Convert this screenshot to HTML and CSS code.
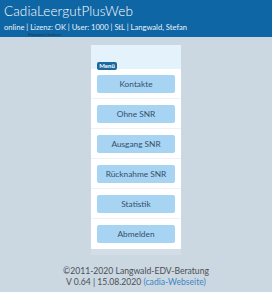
FILE: index.html
```html
<!DOCTYPE html>
<html lang="de">
<head>
<meta charset="utf-8">
<link rel="stylesheet" href="styles.css">
</head>
<body>
<header class="top">
  <div class="title">CadiaLeergutPlusWeb</div>
  <div class="status">online | Lizenz: OK | User: 1000 | StL | Langwald, Stefan</div>
  <div class="hint">Passwort ändern</div>
</header>
<main class="content">
  <section class="panel">
    <div class="panel-head"><span class="badge">Menü</span></div>
    <ul class="menu">
      <li class="row"><a class="btn">Kontakte</a></li>
      <li class="row"><a class="btn">Ohne SNR</a></li>
      <li class="row"><a class="btn">Ausgang SNR</a></li>
      <li class="row"><a class="btn">Rücknahme SNR</a></li>
      <li class="row"><a class="btn">Statistik</a></li>
      <li class="row"><a class="btn">Abmelden</a></li>
    </ul>
  </section>
  <div class="panel-foot"></div>
  <footer class="foot">
    <div>©2011-2020 Langwald-EDV-Beratung</div>
    <div>V 0.64 | 15.08.2020 <a class="link">(cadia-Webseite)</a></div>
  </footer>
</main>
</body>
</html>
```
FILE: styles.css
```css
html, body {
  margin: 0;
  padding: 0;
  background: #ffffff;
  font-family: Lato, "Open Sans", sans-serif;
}
.top {
  position: relative;
  background: #0f66a5;
  color: #ffffff;
  height: 37px;
  padding: 0 4px;
  box-sizing: border-box;
}
.title {
  font-size: 13.5px;
  line-height: 13px;
  padding-top: 5px;
  font-weight: 300;
  letter-spacing: 0.1px;
}
.status {
  font-size: 7.6px;
  line-height: 9px;
  padding-top: 5px;
  color: #eaf3fa;
}
.hint {
  position: absolute;
  left: 28px;
  top: 32px;
  font-size: 4.5px;
  line-height: 5px;
  color: #1b3550;
}
.content {
  background: #cbd7e1;
  height: 255px;
  display: flex;
  flex-direction: column;
  align-items: center;
  padding-top: 8px;
  box-sizing: border-box;
}
.panel {
  width: 90px;
  background: #ffffff;
}
.panel-head {
  background: #e4f2fc;
  height: 24px;
  padding: 7px 0 0 6px;
  box-sizing: border-box;
}
.badge {
  display: inline-block;
  background: #1a68a1;
  color: #ffffff;
  font-size: 6px;
  font-weight: bold;
  line-height: 8px;
  padding: 0 2px;
  border-radius: 2px;
  width: 20px;
  box-sizing: border-box;
  text-align: center;
}
.menu {
  list-style: none;
  margin: 0;
  padding: 0;
}
.row {
  height: 30px;
  padding: 6px 6px;
  box-sizing: border-box;
  border-bottom: 1px solid #eef2f5;
}
.row:last-child {
  border-bottom: none;
}
.btn {
  display: flex;
  align-items: center;
  justify-content: center;
  height: 18px;
  background: #a7d4f3;
  border-radius: 2px;
  color: #34506a;
  font-size: 8.3px;
}
.panel-foot {
  width: 90px;
  height: 6px;
  background: #d3dde6;
}
.foot {
  margin-top: 11px;
  text-align: center;
  color: #4a4f55;
  font-size: 8.6px;
  line-height: 11px;
}
.link {
  color: #3d86c6;
}
```
